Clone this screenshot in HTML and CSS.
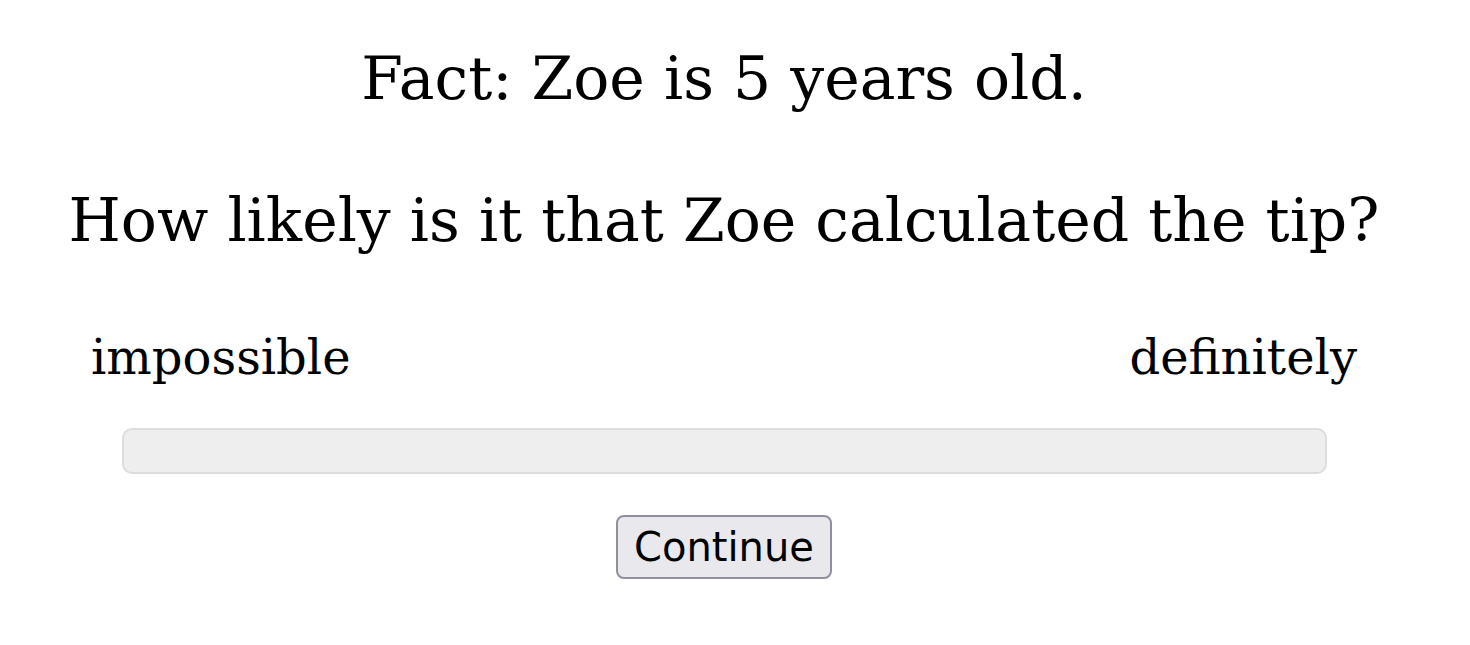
FILE: index.html
```html
<!DOCTYPE html>
<html>
<head>
<meta charset="utf-8">
<link rel="stylesheet" href="styles.css">
</head>
<body>
<main class="page">
  <div class="stimulus">
    <p class="fact">Fact: Zoe is 5 years old.</p>
    <p class="question">How likely is it that Zoe calculated the tip?</p>
  </div>
  <div class="slider-block">
    <div class="labels">
      <span class="label">impossible</span>
      <span class="label">definitely</span>
    </div>
    <div class="track"></div>
  </div>
  <button class="continue">Continue</button>
</main>
</body>
</html>
```

FILE: styles.css
```css
html, body {
  margin: 0;
  padding: 0;
  background: #fff;
}
.page {
  width: 1448px;
  display: flex;
  flex-direction: column;
  align-items: center;
  font-family: "DejaVu Serif", serif;
  color: #000;
  padding-top: 43px;
}
.stimulus {
  display: flex;
  flex-direction: column;
  align-items: center;
  gap: 72px;
}
.fact, .question {
  margin: 0;
  font-size: 60px;
  line-height: 70px;
}
.slider-block {
  width: 1266px;
  margin-top: 74px;
  display: flex;
  flex-direction: column;
  align-items: center;
}
.labels {
  align-self: stretch;
  display: flex;
  justify-content: space-between;
  font-size: 48px;
  line-height: 56px;
}
.track {
  width: 1201px;
  margin-top: 43px;
  height: 42px;
  background: #eeeeee;
  border: 2px solid #dddddd;
  border-radius: 10px;
}
.continue {
  margin-top: 41px;
  font-family: "DejaVu Sans", sans-serif;
  font-size: 40px;
  line-height: 46px;
  padding: 7px 16px;
  background: #e9e9ed;
  border: 2px solid #8f8f9d;
  border-radius: 8px;
  color: #000;
}
```
